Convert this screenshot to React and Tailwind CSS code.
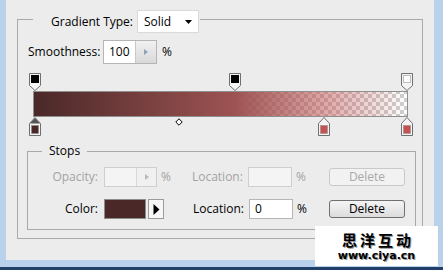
const font = { fontFamily: '"Open Sans", "Liberation Sans", sans-serif' };

function TopMarker({ left, color, stroke = "#6f6f6f" }) {
  return (
    <svg className="absolute top-0" style={{ left }} width="12" height="18" viewBox="0 0 12 18">
      <path d="M0.5 0.5 H11.5 V12.5 L6 17.5 L0.5 12.5 Z" fill="#f4f4f4" stroke={stroke} />
      <rect x="2.5" y="2.5" width="7" height="7" fill={color} stroke={color === "#ffffff" ? "#bdbdbd" : color} />
    </svg>
  );
}

function BottomMarker({ left, color, selected }) {
  return (
    <svg className="absolute top-0" style={{ left }} width="12" height="19" viewBox="0 0 12 19">
      <path d="M0.5 6.5 L6 0.5 L11.5 6.5 V18.5 H0.5 Z" fill="#f4f4f4" stroke="#6f6f6f" />
      {selected && <path d="M1 6.5 L6 1 L11 6.5 Z" fill="#555555" />}
      <rect x="2.5" y="8.5" width="7" height="8" fill={color} stroke="#8a8a8a" strokeWidth="0.5" />
    </svg>
  );
}

function GradientSlider() {
  return (
    <div className="ml-[11px] mt-[9px] w-[384px] flex flex-col">
      {/* opacity stops */}
      <div className="relative h-[18px]">
        <TopMarker left={0} color="#000000" />
        <TopMarker left={200} color="#000000" />
        <TopMarker left={372} color="#ffffff" />
      </div>
      {/* gradient bar */}
      <div className="ml-[4px] w-[375px] h-[26px] border border-[#8f8f8f] bg-[repeating-conic-gradient(#cfcfcf_0_25%,#ffffff_0_50%)] bg-[length:8px_8px] bg-[position:-2px_-2px]">
        <div className="w-full h-full bg-[linear-gradient(to_right,#4a2828_0%,#9e5353_54%,rgba(192,80,80,0.5)_78%,rgba(192,80,80,0)_100%)]" />
      </div>
      {/* color stops */}
      <div className="relative h-[19px]">
        <BottomMarker left={0} color="#4a2828" selected />
        <BottomMarker left={289} color="#c55252" />
        <BottomMarker left={372} color="#c55252" />
        <svg className="absolute top-[1px] left-[146px]" width="8" height="8" viewBox="0 0 8 8">
          <path d="M4 0.8 L7.2 4 L4 7.2 L0.8 4 Z" fill="#ffffff" stroke="#000000" />
        </svg>
      </div>
    </div>
  );
}

function SpinBox({ value, disabled }) {
  return (
    <div
      className={`flex h-full border ${disabled ? "border-[#cfcfcf]" : "border-[#b5b5b5]"}`}
    >
      <div className={`w-[31px] h-full pl-[5px] flex items-center ${disabled ? "bg-[#f4f4f4]" : "bg-white"}`}>
        {value}
      </div>
      <div
        className={`flex-1 h-full border-l flex items-center justify-center ${
          disabled
            ? "border-[#d8d8d8] bg-[#f0f0f0]"
            : "border-[#c8c8c8] bg-[linear-gradient(to_bottom,#f1f1f1,#d9d9d9)]"
        }`}
      >
        <svg width="4" height="6" viewBox="0 0 4 6">
          <path d="M0 0 L4 3 L0 6 Z" fill={disabled ? "#b9b9b9" : "#8ea3bb"} />
        </svg>
      </div>
    </div>
  );
}

function Button({ children, disabled }) {
  return (
    <div
      className={`ml-auto mr-[10px] w-[76px] h-[18px] rounded-[3px] border flex items-center justify-center ${
        disabled
          ? "border-[#c9c9c9] bg-[#f2f2f2] text-[#a8a8a8]"
          : "border-[#707070] bg-[linear-gradient(to_bottom,#f4f4f4,#e9e9e9_50%,#dcdcdc)] text-black"
      }`}
    >
      {children}
    </div>
  );
}

function Stops() {
  return (
    <fieldset className="ml-[9px] mt-[7px] w-[389px] h-[87px] border border-[#a9a9a9]">
      <legend className="ml-[14px] px-[7px] h-[16px] leading-[16px] text-black">Stops</legend>
      <div className="flex flex-col gap-[12px] mt-[8px]">
        {/* opacity row (disabled) */}
        <div className="flex items-center h-[20px] text-[#a3a3a3]">
          <div className="w-[70px] text-right">Opacity:</div>
          <div className="ml-[6px] w-[53px] h-[20px]">
            <SpinBox value="" disabled />
          </div>
          <div className="ml-[4px]">%</div>
          <div className="ml-[21px] w-[56px]">Location:</div>
          <div className="w-[44px] h-[20px] border border-[#cfcfcf] bg-[#f4f4f4]" />
          <div className="ml-[4px]">%</div>
          <Button disabled>Delete</Button>
        </div>
        {/* color row */}
        <div className="flex items-center h-[20px] text-black">
          <div className="w-[70px] text-right">Color:</div>
          <div className="ml-[6px] w-[42px] h-[20px] border border-[#8c8c8c] bg-[#4a2828]" />
          <div className="ml-[2px] w-[16px] h-[20px] border border-[#9a9a9a] bg-[#f7f7f7] flex items-center justify-center">
            <svg width="7" height="11" viewBox="0 0 7 11">
              <path d="M0.5 0 L6.5 5.5 L0.5 11 Z" fill="#000000" />
            </svg>
          </div>
          <div className="ml-[29px] w-[56px]">Location:</div>
          <div className="w-[44px] h-[20px] border border-[#b5b5b5] bg-white pl-[5px] flex items-center">0</div>
          <div className="ml-[4px]">%</div>
          <Button>Delete</Button>
        </div>
      </div>
    </fieldset>
  );
}

export default function App() {
  return (
    <div
      className="relative w-[443px] h-[270px] overflow-hidden bg-[#b9d1ea] flex flex-col text-[12px] text-black"
      style={font}
    >
      <div className="flex-1 flex pl-[6px] pr-[9px] pb-[7px]">
        <div className="flex-1 bg-[#ececec] flex flex-col">
          <fieldset className="ml-[11px] mt-[10px] w-[406px] h-[229px] border border-[#a9a9a9] flex flex-col">
            <legend className="ml-[15px] h-[18px] pr-[1px]">
              <div className="flex items-start">
                <div className="pl-[18px] leading-[23px]">Gradient Type:</div>
                <div className="ml-[4px] w-[62px] h-[23px] bg-white border border-[#dadada] flex items-center pl-[6px] pr-[6px]">
                  <span className="flex-1">Solid</span>
                  <svg width="7" height="4" viewBox="0 0 7 4">
                    <path d="M0 0 H7 L3.5 4 Z" fill="#000000" />
                  </svg>
                </div>
              </div>
            </legend>
            {/* smoothness row */}
            <div className="flex items-center h-[24px] mt-[12px] pl-[10px]">
              <div className="w-[75px]">Smoothness:</div>
              <div className="w-[54px] h-[24px]">
                <SpinBox value="100" />
              </div>
              <div className="ml-[5px]">%</div>
            </div>
            <GradientSlider />
            <Stops />
          </fieldset>
        </div>
      </div>
      <div className="h-[3px] bg-[#20406a]" />

      {/* watermark */}
      <div className="absolute left-[315px] top-[226px] w-[123px] h-[40px] bg-white flex flex-col items-center pt-[6px]">
        <div
          className="text-[15px] leading-[16px] font-bold tracking-[3px] pl-[3px] text-black [text-shadow:1px_1px_0_#9a9a9a]"
          style={{ fontFamily: '"Noto Sans CJK SC", sans-serif' }}
        >
          思洋互动
        </div>
        <div
          className="mt-[2px] text-[11px] leading-[11px] font-bold text-black [text-shadow:1px_1px_0_#9a9a9a]"
          style={{ fontFamily: '"DejaVu Sans", sans-serif' }}
        >
          www.ciya.cn
        </div>
      </div>
    </div>
  );
}
